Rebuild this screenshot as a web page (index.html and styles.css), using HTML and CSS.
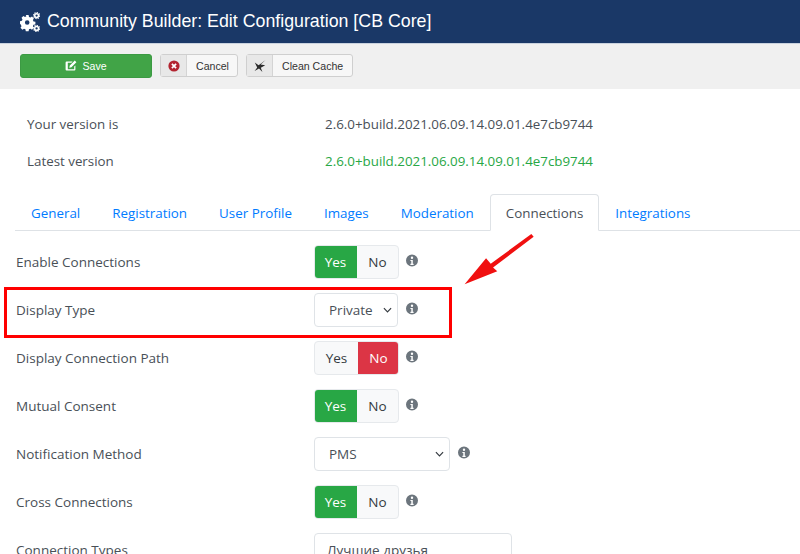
FILE: index.html
```html
<!DOCTYPE html>
<html lang="en">
<head>
<meta charset="utf-8">
<title>Community Builder: Edit Configuration</title>
<link rel="stylesheet" href="styles.css">
</head>
<body>
<svg class="defs" width="0" height="0" aria-hidden="true">
  <symbol id="info" viewBox="0 0 16 16"><path fill="#6c757d" fill-rule="evenodd" d="M8 .5a6 6 0 1 0 0 12 6 6 0 0 0 0-12zM8 2.6a1.2 1.2 0 1 1 0 2.4 1.2 1.2 0 0 1 0-2.4zM6.4 5.9h2.4v3.9h.8v1.1H6.4V9.8h.9V7h-.9z"/></symbol>
</svg>
<header class="titlebar">
  <svg class="gears" viewBox="0 0 20 20" aria-hidden="true">
    <path fill="#fff" fill-rule="evenodd" d="M5.8 3h2.8l.4 1.9 1.4.6 1.6-1 1.9 1.9-1 1.6.6 1.4 1.9.4v2.6l-1.9.4-.6 1.4 1 1.6-1.9 1.9-1.6-1-1.4.6-.4 1.9H5.8l-.4-1.9-1.4-.6-1.6 1-1.9-1.9 1-1.6-.6-1.4L0 11.8V9.2l1.9-.4.6-1.4-1-1.6 1.9-1.9 1.6 1 1.4-.6zM7.2 8.2a2.3 2.3 0 1 0 0 4.6 2.3 2.3 0 0 0 0-4.6z"/>
    <g fill="none" stroke="#fff">
      <circle cx="16.6" cy="3.6" r="1.9" stroke-width="1.5"/>
      <circle cx="16.6" cy="3.6" r="3" stroke-width="1.2" stroke-dasharray="1.3 1"/>
      <circle cx="16.6" cy="16.4" r="1.9" stroke-width="1.5"/>
      <circle cx="16.6" cy="16.4" r="3" stroke-width="1.2" stroke-dasharray="1.3 1"/>
    </g>
  </svg>
  <h1>Community Builder: Edit Configuration [CB Core]</h1>
</header>
<div class="toolbar">
  <button class="btn-save" type="button">
    <svg class="save-ico" viewBox="0 0 12 12" aria-hidden="true"><path fill="#fff" d="M1.6 1.6h6L6.4 2.8H2.8v6.4h6.4V6.6l1.2-1.2v4.2a1 1 0 0 1-1 1H1.6a1 1 0 0 1-1-1V2.6a1 1 0 0 1 1-1zM9.8.6l1.6 1.6-5 5-2.1.5.5-2.1z"/></svg>
    Save
  </button>
  <div class="btn-tool cancel">
    <span class="tool-ico"><svg viewBox="0 0 14 14" aria-hidden="true"><circle cx="7" cy="7" r="5.6" fill="#b32430"/><path d="M4.9 4.9l4.2 4.2M9.1 4.9l-4.2 4.2" stroke="#fff" stroke-width="1.7"/></svg></span>
    <span class="tool-text">Cancel</span>
  </div>
  <div class="btn-tool clean">
    <span class="tool-ico"><svg viewBox="0 0 14 14" aria-hidden="true"><path fill="#2b2b2b" d="M12.6 1 7.6 5.6l4.6.6-4.4 2.6 1.6 4.2L6 9.6 1.6 12l2.6-3.6L1.8 3.4l3.8 2.8z"/></svg></span>
    <span class="tool-text">Clean Cache</span>
  </div>
</div>
<main class="content">
  <dl class="versions">
    <div class="vrow"><dt>Your version is</dt><dd>2.6.0+build.2021.06.09.14.09.01.4e7cb9744</dd></div>
    <div class="vrow"><dt>Latest version</dt><dd class="latest">2.6.0+build.2021.06.09.14.09.01.4e7cb9744</dd></div>
  </dl>
  <nav class="tabs">
    <a>General</a><a>Registration</a><a>User Profile</a><a>Images</a><a>Moderation</a><a class="active">Connections</a><a>Integrations</a>
  </nav>
  <form class="form">
    <div class="row"><label>Enable Connections</label><div class="toggle"><span class="on-yes">Yes</span><span>No</span></div><svg class="info"><use href="#info"/></svg></div>
    <div class="row"><label>Display Type</label><div class="select sel-short">Private<svg class="chev" viewBox="0 0 10 6"><path d="M1 1l4 4 4-4" fill="none" stroke="#343a40" stroke-width="1.3"/></svg></div><svg class="info"><use href="#info"/></svg></div>
    <div class="row"><label>Display Connection Path</label><div class="toggle"><span>Yes</span><span class="on-no">No</span></div><svg class="info"><use href="#info"/></svg></div>
    <div class="row"><label>Mutual Consent</label><div class="toggle"><span class="on-yes">Yes</span><span>No</span></div><svg class="info"><use href="#info"/></svg></div>
    <div class="row"><label>Notification Method</label><div class="select sel-long">PMS<svg class="chev" viewBox="0 0 10 6"><path d="M1 1l4 4 4-4" fill="none" stroke="#343a40" stroke-width="1.3"/></svg></div><svg class="info"><use href="#info"/></svg></div>
    <div class="row"><label>Cross Connections</label><div class="toggle"><span class="on-yes">Yes</span><span>No</span></div><svg class="info"><use href="#info"/></svg></div>
    <div class="row"><label>Connection Types</label><div class="textarea">Лучшие друзья</div></div>
  </form>
</main>
<div class="redbox"></div>
<svg class="arrow" viewBox="0 0 80 60" aria-hidden="true">
  <path fill="#f01010" d="M72.5 1 75 4 31.5 37 36 41 1 55 24 27 29 33z"/>
</svg>
</body>
</html>
```
FILE: styles.css
```css
* { box-sizing: border-box; }
html, body { margin: 0; padding: 0; }
body {
  width: 800px;
  height: 554px;
  overflow: hidden;
  position: relative;
  background: #fff;
  color: #495057;
  font-family: "Open Sans", "Noto Sans CJK SC", sans-serif;
  font-size: 13.5px;
}
.defs { position: absolute; }
.titlebar {
  height: 44px;
  background: #1a3867;
  border-bottom: 1px solid #c9d2de;
  display: flex;
  align-items: center;
  padding-left: 20px;
  gap: 7px;
}
.gears { width: 20px; height: 20px; }
.titlebar h1 {
  margin: 0;
  color: #fff;
  font: 400 17.8px "Liberation Sans", sans-serif;
}
.toolbar {
  height: 45px;
  background: #f0f0f0;
  display: flex;
  align-items: center;
  padding: 0 0 2px 20px;
  gap: 8px;
  font-family: "Liberation Sans", sans-serif;
  font-size: 10.6px;
}
.btn-save {
  width: 132px;
  height: 24px;
  background: #41a447;
  border: 1px solid #3c9a43;
  border-radius: 3px;
  color: #fff;
  font: inherit;
  display: flex;
  align-items: center;
  justify-content: center;
  gap: 5px;
  padding: 0;
}
.save-ico { width: 12px; height: 12px; }
.btn-tool {
  height: 23px;
  display: flex;
  align-items: stretch;
  border: 1px solid #cfcfcf;
  border-radius: 3px;
  background: #f7f7f7;
  color: #333;
}
.tool-ico {
  width: 26px;
  background: #e8e8e8;
  border-right: 1px solid #d4d4d4;
  display: flex;
  align-items: center;
  justify-content: center;
}
.tool-ico svg { width: 14px; height: 14px; }
.tool-text { display: flex; align-items: center; padding: 0 9px; }
.cancel .tool-text { width: 50px; }
.versions { margin: 0; padding: 16px 0 0 27px; font-size: 13.35px; }
.vrow { display: flex; height: 37px; align-items: center; margin: 0; }
.vrow dt { width: 298px; }
.vrow dd { margin: 0; }
.latest { color: #28a745; }
.tabs {
  margin: 15px 0 0 15px;
  height: 37px;
  display: flex;
  border-bottom: 1px solid #dee2e6;
  font-size: 13.38px;
}
.tabs a {
  display: flex;
  align-items: center;
  padding: 0 15px;
  height: 37px;
  color: #007bff;
  border: 1px solid transparent;
  border-radius: 4px 4px 0 0;
}
.tabs .active {
  color: #495057;
  background: #fff;
  border-color: #dee2e6 #dee2e6 #fff;
}
.form { padding: 14px 0 0 16px; }
.row {
  height: 34px;
  margin-bottom: 14px;
  display: flex;
  align-items: center;
}
.row label { width: 298px; }
.toggle {
  width: 85px;
  height: 34px;
  display: flex;
  border-radius: 4px;
  overflow: hidden;
  border: 1px solid #e6e9ec;
  background: #f8f9fa;
  color: #343a40;
}
.toggle span {
  flex: 1 1 50%;
  display: flex;
  align-items: center;
  justify-content: center;
}
.toggle span:first-child { flex: 0 0 43px; }
.toggle .on-yes { background: #28a745; color: #fff; margin: -1px 0 -1px -1px; }
.toggle .on-no { background: #dc3545; color: #fff; margin: -1px -1px -1px 0; }
.select {
  height: 34px;
  border: 1px solid #dfe3e7;
  border-radius: 4px;
  background: #fff;
  display: flex;
  align-items: center;
  justify-content: space-between;
  padding: 0 5px 0 14px;
}
.sel-short { width: 84px; }
.sel-long { width: 136px; }
.chev { width: 9px; height: 6px; }
.info { width: 16px; height: 16px; margin: 0 0 0 6px; }
.toggle + .info { margin-left: 5px; }
.textarea {
  width: 198px;
  height: 60px;
  border: 1px solid #dfe3e7;
  border-radius: 4px;
  padding: 7px 0 0 12px;
  align-self: flex-start;
}
.redbox {
  position: absolute;
  left: 4px;
  top: 287px;
  width: 448px;
  height: 51px;
  border: 3px solid #f00;
}
.arrow {
  position: absolute;
  left: 463px;
  top: 233px;
  width: 76px;
  height: 56px;
}
```
